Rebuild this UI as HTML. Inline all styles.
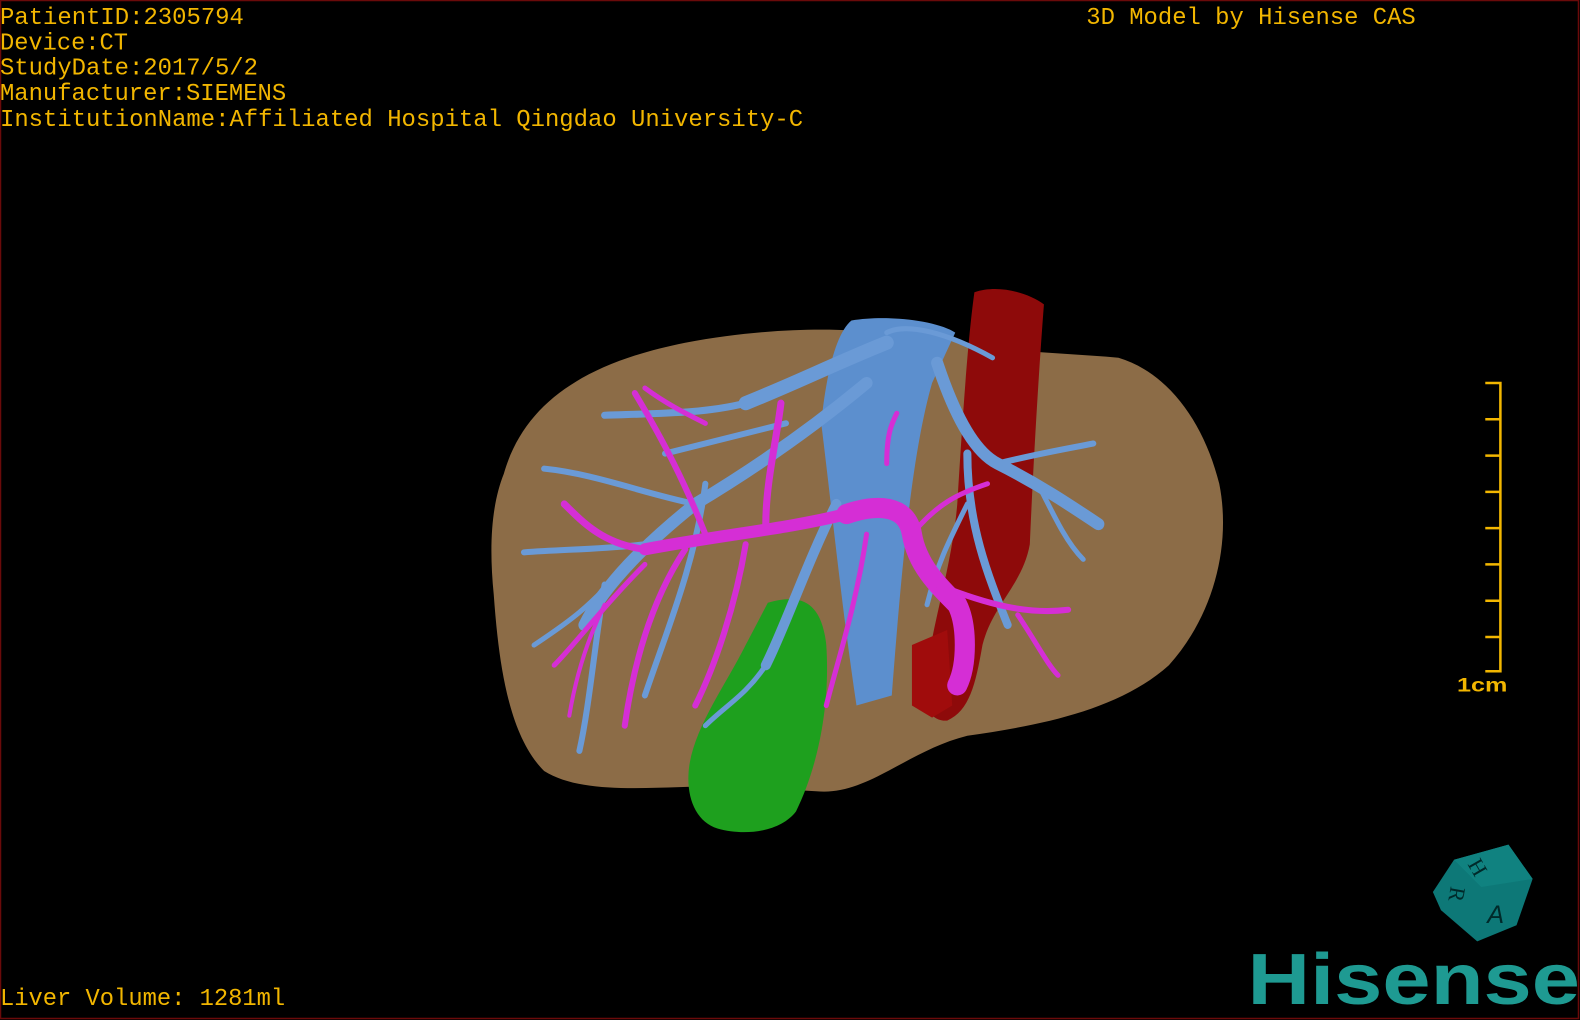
<!DOCTYPE html>
<html><head><meta charset="utf-8">
<style>
html,body{margin:0;padding:0;background:#000;}
#w{position:relative;width:1580px;height:1020px;overflow:hidden;background:#000;}
svg{position:absolute;left:0;top:0;}
.t{font-family:"Liberation Mono",monospace;font-size:24px;fill:#f2b600;}
</style></head><body><div id="w">
<svg width="1580" height="1020" viewBox="0 0 1568 1012" preserveAspectRatio="none">
<rect x="0.5" y="0.5" width="1566" height="1010" fill="#000" stroke="#6a0a0a" stroke-width="1.5"/>
<text class="t" x="0" y="24" textLength="242" lengthAdjust="spacingAndGlyphs">PatientID:2305794</text>
<text class="t" x="0" y="49" textLength="127" lengthAdjust="spacingAndGlyphs">Device:CT</text>
<text class="t" x="0" y="74" textLength="256" lengthAdjust="spacingAndGlyphs">StudyDate:2017/5/2</text>
<text class="t" x="0" y="99" textLength="284" lengthAdjust="spacingAndGlyphs">Manufacturer:SIEMENS</text>
<text class="t" x="0" y="125" textLength="797" lengthAdjust="spacingAndGlyphs">InstitutionName:Affiliated Hospital Qingdao University-C</text>
<text class="t" x="1078" y="24" textLength="327" lengthAdjust="spacingAndGlyphs">3D Model by Hisense CAS</text>
<text class="t" x="0" y="997" textLength="283" lengthAdjust="spacingAndGlyphs">Liver Volume: 1281ml</text>

<!-- scale bar -->
<g stroke="#f2b600" stroke-width="2.5" fill="none">
<path d="M1474 380 H1489 V666 H1474"/>
<path d="M1474 416H1489M1474 452H1489M1474 488H1489M1474 524H1489M1474 560H1489M1474 596H1489M1474 632H1489"/>
</g>
<text x="1446" y="686" font-family="Liberation Sans,sans-serif" font-size="19" font-weight="bold" fill="#f2b600" textLength="50" lengthAdjust="spacingAndGlyphs">1cm</text>

<!-- liver -->
<path d="M500 470 C520 400 580 360 680 340 C760 325 830 325 870 330 L960 340 C1000 350 1060 350 1110 355 C1160 370 1195 420 1210 480 C1222 540 1205 610 1160 660 C1110 705 1030 720 960 730 C900 745 860 790 810 785 L720 780 C650 780 580 790 540 765 C505 730 495 660 490 590 C485 540 488 500 500 470 Z" fill="#8c6c47"/>

<!-- green gallbladder -->
<path d="M762 598 C790 590 815 592 820 640 C824 700 812 760 790 805 C775 825 740 830 712 822 C690 815 680 790 684 760 C690 720 720 680 740 640 Z" fill="#1ea01e"/>

<!-- red IVC -->
<path d="M967 290 C990 282 1020 290 1036 302 C1030 380 1025 470 1022 540 C1015 580 985 600 975 640 C968 680 962 705 940 715 C920 716 915 695 920 665 C925 620 945 560 950 500 C955 420 960 340 967 290 Z" fill="#8e0a0a"/>
<path d="M905 640 L940 625 L945 700 L925 712 L905 700 Z" fill="#a00c0c"/>

<!-- blue trunk -->
<path d="M845 318 C880 312 930 318 948 330 L925 380 C905 450 895 560 885 690 L850 700 C835 600 825 500 815 420 C820 370 830 330 845 318 Z" fill="#5c8fce"/>
<g stroke="#6a9ad6" fill="none" stroke-linecap="round">
<path stroke-width="14" d="M880 340 C830 360 790 380 740 400"/>
<path stroke-width="12" d="M860 380 C800 430 740 470 690 500 C640 540 600 580 580 620"/>
<path stroke-width="10" d="M830 500 C800 560 780 620 760 660"/>
<path stroke-width="12" d="M930 360 C950 420 970 450 990 460 C1030 480 1060 500 1090 520"/>
<path stroke-width="8" d="M960 450 C960 520 980 570 1000 620"/>
<path stroke-width="7" d="M740 400 C700 410 660 410 600 412"/>
<path stroke-width="6" d="M690 500 C640 490 590 470 540 465"/>
<path stroke-width="6" d="M640 540 C600 545 560 545 520 548"/>
<path stroke-width="6" d="M600 580 C590 640 585 700 575 745"/>
<path stroke-width="6" d="M700 480 C690 560 660 630 640 690"/>
<path stroke-width="6" d="M780 420 C740 430 700 440 660 450"/>
<path stroke-width="5" d="M620 560 C590 600 560 620 530 640"/>
<path stroke-width="6" d="M990 460 C1030 450 1060 445 1085 440"/>
<path stroke-width="5" d="M1030 480 C1050 520 1060 540 1075 555"/>
<path stroke-width="5" d="M960 500 C940 540 930 560 920 600"/>
<path stroke-width="5" d="M760 660 C740 690 720 700 700 720"/>
<path stroke-width="5" d="M880 330 C900 320 940 330 985 355"/>
</g>

<!-- magenta -->
<g stroke="#d52ed5" fill="none" stroke-linecap="round">
<path stroke-width="20" d="M840 510 C870 500 900 500 905 530 C910 560 930 580 950 600 C960 620 960 660 950 680"/>
<path stroke-width="12" d="M840 510 C780 525 720 530 640 545"/>
<path stroke-width="7" d="M640 545 C600 540 580 520 560 500"/>
<path stroke-width="6" d="M700 530 C680 480 660 440 630 390"/>
<path stroke-width="7" d="M760 520 C760 480 770 440 775 400"/>
<path stroke-width="6" d="M740 540 C730 600 710 660 690 700"/>
<path stroke-width="6" d="M680 545 C650 590 630 650 620 720"/>
<path stroke-width="5" d="M640 560 C600 600 570 640 550 660"/>
<path stroke-width="6" d="M930 580 C980 600 1020 610 1060 605"/>
<path stroke-width="5" d="M1010 610 C1030 640 1040 660 1050 670"/>
<path stroke-width="5" d="M905 530 C930 500 950 490 980 480"/>
<path stroke-width="5" d="M860 530 C850 600 830 660 820 700"/>
<path stroke-width="5" d="M880 460 C880 430 885 420 890 410"/>
<path stroke-width="5" d="M700 420 C680 410 660 400 640 385"/>
<path stroke-width="4" d="M600 600 C580 640 570 680 565 710"/>
</g>

<!-- cube -->
<g>
<path d="M1422 885 L1443 853 L1497 838 L1521 872 L1505 918 L1466 934 L1430 903 Z" fill="#0d7877"/>
<path d="M1443 853 L1497 838 L1521 872 L1470 880 Z" fill="#108280"/>
<text x="1458" y="870" font-family="Liberation Serif,serif" font-size="22" fill="#002a2a" transform="rotate(60 1468 862)">H</text>
<text x="1436" y="898" font-family="Liberation Serif,serif" font-size="22" fill="#002a2a" transform="rotate(100 1446 890)">R</text>
<text x="1476" y="916" font-family="Liberation Sans,sans-serif" font-style="italic" font-size="25" fill="#002a2a">A</text>
</g>
<text x="1238" y="996" font-family="Liberation Sans,sans-serif" font-weight="bold" font-size="72" fill="#1e9a92" textLength="330" lengthAdjust="spacingAndGlyphs">Hisense</text>
</svg>
</div></body></html>
